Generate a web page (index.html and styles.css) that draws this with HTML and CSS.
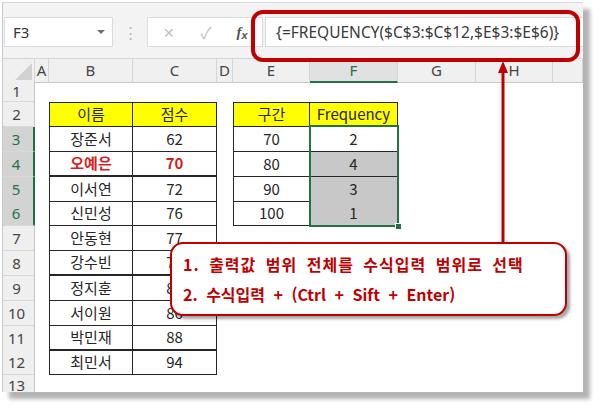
FILE: index.html
```html
<!DOCTYPE html>
<html lang="ko">
<head>
<meta charset="utf-8">
<title>FREQUENCY</title>
<link rel="stylesheet" href="styles.css">
</head>
<body>
<div class="window">
  <div class="fbar">
    <div class="namebox"><span>F3</span><span class="caret"></span></div>
    <div class="grip">⋮</div>
    <div class="fxbox">
      <span class="btn x">✕</span>
      <span class="btn ck">✓</span>
      <span class="btn fx"><i>f</i><i class="sub">x</i></span>
    </div>
    <div class="formula">{=FREQUENCY($C$3:$C$12,$E$3:$E$6)}</div>
  </div>
  <div class="sheet">
    <div class="row hrow">
      <div class="ch corner"><span class="tri"></span></div>
      <div class="ch">A</div><div class="ch">B</div><div class="ch">C</div><div class="ch">D</div>
      <div class="ch">E</div><div class="ch sel">F</div><div class="ch">G</div><div class="ch">H</div><div class="ch"></div>
    </div>
    <div class="row r1">
      <div class="rh">1</div><div></div><div></div><div></div><div></div><div></div><div></div><div></div><div></div><div></div>
    </div>
    <div class="row r">
      <div class="rh">2</div><div></div>
      <div class="t l top hd">이름</div><div class="t top hd">점수</div><div></div>
      <div class="t l top hd">구간</div><div class="t top hd">Frequency</div><div></div><div></div><div></div>
    </div>
    <div class="row r">
      <div class="rh sel">3</div><div></div>
      <div class="t l">장준서</div><div class="t">62</div><div></div>
      <div class="t l">70</div><div class="t">2</div><div></div><div></div><div></div>
    </div>
    <div class="row r">
      <div class="rh sel">4</div><div></div>
      <div class="t l red thick">오예은</div><div class="t red thick">70</div><div></div>
      <div class="t l">80</div><div class="t gray">4</div><div></div><div></div><div></div>
    </div>
    <div class="row r">
      <div class="rh sel">5</div><div></div>
      <div class="t l">이서연</div><div class="t">72</div><div></div>
      <div class="t l">90</div><div class="t gray">3</div><div></div><div></div><div></div>
    </div>
    <div class="row r">
      <div class="rh sel">6</div><div></div>
      <div class="t l">신민성</div><div class="t">76</div><div></div>
      <div class="t l">100</div><div class="t gray">1</div><div></div><div></div><div></div>
    </div>
    <div class="row r">
      <div class="rh">7</div><div></div>
      <div class="t l">안동현</div><div class="t">77</div><div></div><div></div><div></div><div></div><div></div><div></div>
    </div>
    <div class="row r">
      <div class="rh">8</div><div></div>
      <div class="t l thick">강수빈</div><div class="t thick">79</div><div></div><div></div><div></div><div></div><div></div><div></div>
    </div>
    <div class="row r">
      <div class="rh">9</div><div></div>
      <div class="t l">정지훈</div><div class="t">84</div><div></div><div></div><div></div><div></div><div></div><div></div>
    </div>
    <div class="row r">
      <div class="rh">10</div><div></div>
      <div class="t l">서이원</div><div class="t">86</div><div></div><div></div><div></div><div></div><div></div><div></div>
    </div>
    <div class="row r">
      <div class="rh">11</div><div></div>
      <div class="t l thick">박민재</div><div class="t thick">88</div><div></div><div></div><div></div><div></div><div></div><div></div>
    </div>
    <div class="row r">
      <div class="rh">12</div><div></div>
      <div class="t l">최민서</div><div class="t">94</div><div></div><div></div><div></div><div></div><div></div><div></div>
    </div>
    <div class="row r13">
      <div class="rh">13</div><div></div><div></div><div></div><div></div><div></div><div></div><div></div><div></div><div></div>
    </div>
  </div>
</div>

<div class="selection"><span class="handle"></span></div>
<div class="highlight"></div>
<svg class="arrow" width="14" height="184" viewBox="0 0 14 184">
  <line x1="7" y1="12" x2="7" y2="184" stroke="#c00000" stroke-width="3"/>
  <polygon points="7,2 2,14 12,14" fill="#c00000"/>
</svg>
<div class="callout">
  <div class="wide">1. 출력값 범위 전체를 수식입력 범위로 선택</div>
  <div>2. 수식입력 + (Ctrl + Sift + Enter)</div>
</div>
</body>
</html>
```

FILE: styles.css
```css
* { box-sizing: border-box; }
body {
  margin: 0;
  width: 600px;
  height: 410px;
  overflow: hidden;
  position: relative;
  background: #fff;
  font-family: "Noto Sans", "Noto Sans CJK KR", sans-serif;
  color: #333;
}
.window {
  margin: 2px 0 0 2px;
  width: 581px;
  height: 390px;
  border-left: 1px solid #c9c9c9;
  border-top: 1px solid #d9d9d9;
  background: #fff;
  box-shadow: 7px 7px 4px rgba(0, 0, 0, 0.3);
  overflow: hidden;
}
.fbar {
  height: 56px;
  background: #f3f3f3;
  display: flex;
  align-items: flex-start;
  padding: 14px 0 0 1px;
  border-bottom: 1px solid #d6d6d6;
}
.namebox {
  width: 109px;
  height: 30px;
  background: #fff;
  border: 1px solid #dcdcdc;
  display: flex;
  align-items: center;
  justify-content: space-between;
  padding: 0 7px 0 8px;
  font-size: 15px;
  color: #333;
}
.caret {
  width: 0;
  height: 0;
  border-left: 4px solid transparent;
  border-right: 4px solid transparent;
  border-top: 4px solid #707070;
}
.grip {
  width: 34px;
  height: 30px;
  display: flex;
  align-items: center;
  justify-content: center;
  color: #b5b5b5;
  font-size: 15px;
}
.fxbox {
  width: 116px;
  height: 30px;
  background: #fff;
  border: 1px solid #dcdcdc;
  display: flex;
  align-items: center;
}
.btn {
  display: flex;
  align-items: center;
  justify-content: center;
  height: 28px;
}
.x { width: 42px; color: #c2c2c2; font-size: 14px; }
.ck { width: 32px; color: #c2c2c2; font-size: 16px; }
.fx { width: 40px; color: #555; font-family: "Liberation Serif", serif; font-size: 15px; font-weight: bold; }
.fx .sub { font-size: 11px; margin-top: 5px; font-family: "Liberation Sans", sans-serif; font-style: italic; }
.formula {
  flex: 1;
  height: 30px;
  margin-left: 2px;
  background: #fff;
  border: 1px solid #dcdcdc;
  border-right: none;
  padding-left: 10px;
  font-size: 15.5px;
  line-height: 28px;
  color: #3a3a3a;
  white-space: nowrap;
}
.row {
  display: grid;
  grid-template-columns: 32px 14px 84px 84px 16px 77px 88px 78px 77px 1fr;
}
.hrow { height: 23px; }
.r1 { height: 20px; }
.r { height: 24.85px; }
.r13 { height: 20px; }
.ch {
  background: #f0f0f0;
  border-right: 1px solid #d5d5d5;
  border-bottom: 1px solid #c8c8c8;
  text-align: center;
  font-size: 15px;
  line-height: 22px;
  color: #444;
}
.ch.sel {
  background: #e1e1e1;
  border-bottom: 2px solid #217346;
  color: #217346;
}
.corner {
  display: flex;
  align-items: flex-end;
  justify-content: flex-end;
  padding: 0 2px 2px 0;
}
.tri {
  width: 0;
  height: 0;
  border-left: 17px solid transparent;
  border-bottom: 17px solid #d2d2d2;
}
.rh {
  background: #efefef;
  border-right: 1px solid #c6c6c6;
  border-bottom: 1px solid #d8d8d8;
  text-align: center;
  padding-right: 4px;
  font-size: 15px;
  line-height: 24px;
  color: #444;
}
.r1 .rh { line-height: 19px; }
.r13 .rh { line-height: 21px; }
.rh.sel {
  background: #d3d3d3;
  color: #217346;
  border-right: 2px solid #217346;
}
.t {
  border-right: 1px solid #262626;
  border-bottom: 1px solid #262626;
  text-align: center;
  font-family: "Noto Sans CJK KR", sans-serif;
  font-size: 15px;
  line-height: 23px;
  color: #262626;
}
.t.l { border-left: 1px solid #262626; }
.t.top { border-top: 1px solid #262626; line-height: 22px; }
.t.thick { border-bottom-width: 2px; line-height: 22px; }
.hd { background: #ffff00; }
.red { color: #d81e1e; font-weight: bold; }
.gray { background: #c8c8c8; }
.selection {
  position: absolute;
  left: 309px;
  top: 125px;
  width: 90px;
  height: 102px;
  border: 2px solid #217346;
}
.handle {
  position: absolute;
  right: -5px;
  bottom: -5px;
  width: 7px;
  height: 7px;
  background: #217346;
  border: 1px solid #fff;
}
.highlight {
  position: absolute;
  left: 251px;
  top: 10px;
  width: 329px;
  height: 52px;
  border: 4px solid #c00000;
  border-radius: 12px;
}
.arrow {
  position: absolute;
  left: 496px;
  top: 59px;
}
.callout {
  position: absolute;
  left: 170px;
  top: 242px;
  width: 397px;
  height: 74px;
  background: #fff;
  border: 2px solid #c00000;
  border-radius: 13px;
  box-shadow: 3px 3px 3px rgba(0, 0, 0, 0.35);
  padding: 5px 0 0 11px;
  font-family: "Noto Sans CJK KR", sans-serif;
  font-weight: bold;
  font-size: 16px;
  line-height: 30px;
  color: #c00000;
  word-spacing: 4px;
  white-space: nowrap;
}
.callout .wide { letter-spacing: 1px; }
```
